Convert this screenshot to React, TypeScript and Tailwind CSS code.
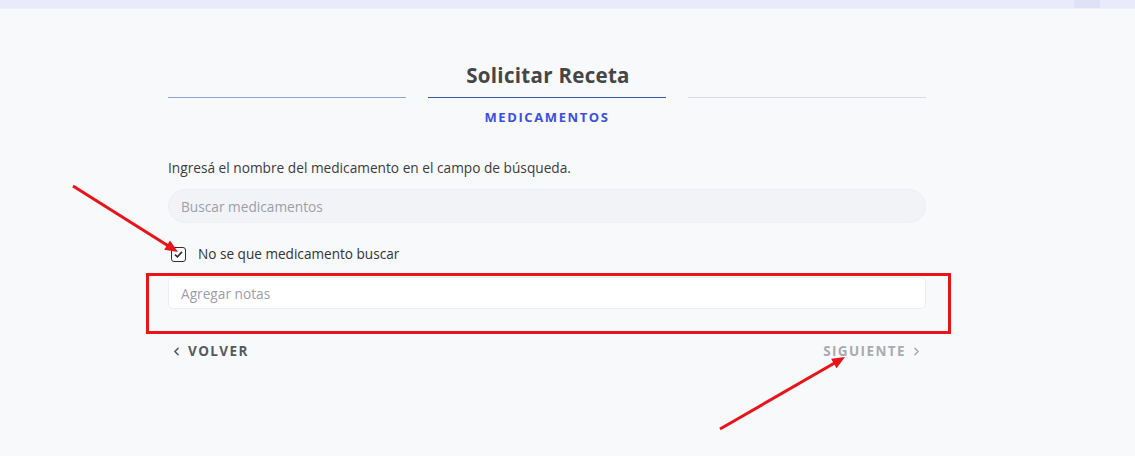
import { ChevronLeft, ChevronRight } from "lucide-react";

function Arrow({ x1, y1, x2, y2 }: { x1: number; y1: number; x2: number; y2: number }) {
  const a = Math.atan2(y2 - y1, x2 - x1);
  const len = 14;
  const w = 0.4;
  const p1 = [x2 - len * Math.cos(a - w), y2 - len * Math.sin(a - w)];
  const p2 = [x2 - len * Math.cos(a + w), y2 - len * Math.sin(a + w)];
  return (
    <g>
      <line x1={x1} y1={y1} x2={x2 - 8 * Math.cos(a)} y2={y2 - 8 * Math.sin(a)} stroke="#e8141a" strokeWidth="3" />
      <polygon points={`${x2},${y2} ${p1[0]},${p1[1]} ${p2[0]},${p2[1]}`} fill="#e8141a" />
    </g>
  );
}

export default function App() {
  return (
    <div className="relative min-h-[456px] w-[1135px] bg-[#f8f9fb] font-['Open_Sans',sans-serif] text-[#3c3c3c]">
      {/* top bar */}
      <div className="flex h-[9px] bg-[#e9ebfa] border-b border-[#eef0fb]">
        <div className="flex-1" />
        <div className="w-[26px] bg-[#dfe1f5] mr-[35px]" />
      </div>

      <div className="ml-[168px] w-[758px] pt-[53px]">
        <h1 className="text-center text-[20.5px] font-bold tracking-[0.3px] text-[#464646] leading-[26px] pl-[2px]">Solicitar Receta</h1>

        <div className="mt-[9px] grid grid-cols-3 gap-[22px]">
          <div className="h-px bg-[#8fa2d6]" />
          <div className="h-px bg-[#3b55a8]" />
          <div className="h-px bg-[#d5d9e8]" />
        </div>

        <div className="grid grid-cols-3 gap-[22px] mt-[10px]">
          <div />
          <div className="text-center text-[13px] font-bold tracking-[1.6px] text-[#3b50e0] leading-[18px]">MEDICAMENTOS</div>
          <div />
        </div>

        <p className="mt-[32px] text-[13.7px] leading-[20px] text-[#3c3c3c]">
          Ingresá el nombre del medicamento en el campo de búsqueda.
        </p>

        <input
          className="mt-[11px] block h-[34px] w-full rounded-full border border-[#eceef3] bg-[#f2f3f6] px-[12px] text-[13.7px] placeholder:text-[#9c9ea8] outline-none"
          placeholder="Buscar medicamentos"
        />

        <label className="mt-[22px] flex items-center gap-[12px] pl-[3px]">
          <span className="flex h-[15px] w-[15px] items-center justify-center rounded-[3px] border-[1.5px] border-[#2f2f2f] bg-white">
            <svg viewBox="0 0 12 12" className="h-[11px] w-[11px]">
              <path d="M2.2 6.2 L4.8 8.6 L9.8 3.2" fill="none" stroke="#2f2f2f" strokeWidth="1.8" />
            </svg>
          </span>
          <span className="text-[13.6px] leading-[18px] text-[#333]">No se que medicamento buscar</span>
        </label>

        <input
          className="mt-[14px] block h-[32px] w-full rounded-[5px] border border-[#eceef3] bg-white px-[12px] text-[13.7px] placeholder:text-[#9c9ea8] outline-none"
          placeholder="Agregar notas"
        />

        <div className="mt-[32px] flex items-center justify-between">
          <button className="flex items-center gap-[5px] pl-[2px] text-[13.5px] font-bold tracking-[1.4px] text-[#555a60]">
            <ChevronLeft className="h-[13px] w-[13px]" strokeWidth={3} />
            VOLVER
          </button>
          <button className="flex items-center gap-[4px] pr-[3px] text-[13.5px] font-bold tracking-[1.4px] text-[#a9abb0]">
            SIGUIENTE
            <ChevronRight className="h-[13px] w-[13px]" strokeWidth={3} />
          </button>
        </div>
      </div>

      {/* annotations */}
      <div className="pointer-events-none absolute left-[146px] top-[273px] h-[61px] w-[805px] border-[3px] border-[#e8141a]" />
      <svg className="pointer-events-none absolute left-0 top-0" width="1135" height="456">
        <Arrow x1={73} y1={186} x2={178} y2={252} />
        <Arrow x1={720} y1={429} x2={845} y2={357} />
      </svg>
    </div>
  );
}
